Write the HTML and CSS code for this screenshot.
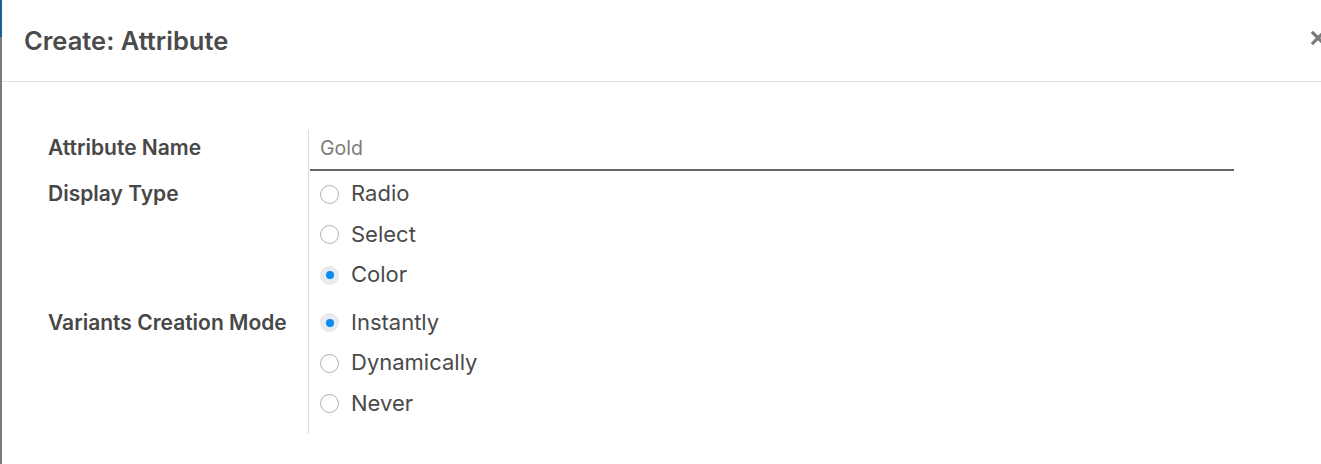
FILE: index.html
```html
<!DOCTYPE html>
<html lang="en">
<head>
<meta charset="utf-8">
<title>Create: Attribute</title>
<link rel="stylesheet" href="styles.css">
</head>
<body>
<div class="page">
  <div class="backdrop"><div class="backdrop-top"></div></div>
  <div class="modal">
    <header class="modal-header">
      <h4 class="modal-title">Create: Attribute</h4>
      <button class="close" aria-label="Close">
        <svg width="14" height="14" viewBox="0 0 14 14"><path d="M2 2 L12 12 M12 2 L2 12" stroke="#7a7a7a" stroke-width="3.2" stroke-linecap="square" fill="none"/></svg>
      </button>
    </header>
    <main class="modal-body">
      <div class="form-grid">
        <div class="label row-name">Attribute Name</div>
        <div class="value row-name">
          <div class="input">Gold</div>
        </div>

        <div class="label row-display">Display Type</div>
        <div class="value row-display">
          <div class="radio"><span class="circle"></span><span>Radio</span></div>
          <div class="radio"><span class="circle"></span><span>Select</span></div>
          <div class="radio"><span class="circle checked"></span><span>Color</span></div>
        </div>

        <div class="label row-variants">Variants Creation Mode</div>
        <div class="value row-variants last">
          <div class="radio"><span class="circle checked"></span><span>Instantly</span></div>
          <div class="radio"><span class="circle"></span><span>Dynamically</span></div>
          <div class="radio"><span class="circle"></span><span>Never</span></div>
        </div>
      </div>
    </main>
  </div>
</div>
</body>
</html>
```
FILE: styles.css
```css
html, body {
  margin: 0;
  padding: 0;
  background: #ffffff;
}
body {
  width: 1321px;
  height: 464px;
  overflow: hidden;
  font-family: Inter, Roboto, "Liberation Sans", Arial, sans-serif;
  color: #4a4a4a;
}
.page {
  display: flex;
  height: 464px;
}
.backdrop {
  width: 2px;
  flex: none;
  background: #7b7b7b;
}
.backdrop-top {
  height: 37px;
  background: #1f5f93;
}
.modal {
  flex: 1;
  min-width: 0;
  background: #fff;
  overflow: hidden;
}
.modal-header {
  height: 81px;
  border-bottom: 1px solid #e2e2e6;
  display: flex;
  align-items: center;
  justify-content: space-between;
  padding-left: 22px;
}
.modal-title {
  margin: 0;
  font-size: 25.5px;
  font-weight: 600;
  color: #4b4b4b;
}
.close {
  border: none;
  background: none;
  padding: 0;
  margin-right: -4px;
  margin-top: -5px;
  display: flex;
  cursor: pointer;
}
.modal-body {
  padding: 48px 0 0 46px;
}
.form-grid {
  display: grid;
  grid-template-columns: 260px 926px;
}
.label {
  font-size: 21px;
  font-weight: 600;
  color: #474747;
  line-height: 40px;
}
.label.row-name {
  line-height: 36px;
}
.label.row-display {
  padding-top: 0;
}
.label.row-variants {
  padding-top: 7px;
}
.value {
  border-left: 1px solid #dcdcdc;
  padding-left: 1px;
}
.value.row-name {
  padding-bottom: 3px;
}
.value.row-variants {
  padding-top: 7px;
  padding-bottom: 10px;
}
.input {
  height: 39px;
  line-height: 36px;
  border-bottom: 2px solid #666666;
  padding-left: 10px;
  font-size: 19.5px;
  color: #7c7c7c;
  box-sizing: content-box;
}
.radio {
  display: flex;
  align-items: center;
  height: 40.5px;
  padding-left: 10px;
  font-size: 22px;
  line-height: 26px;
  color: #4a4a4a;
}
.radio span:last-child {
  position: relative;
  top: -1px;
}
.circle {
  width: 19px;
  height: 19px;
  box-sizing: border-box;
  border: 1px solid #aeb3b8;
  border-radius: 50%;
  margin-right: 12px;
  flex: none;
  display: flex;
  align-items: center;
  justify-content: center;
}
.circle.checked {
  border-color: #e6e8eb;
  background: #e9ebee;
}
.circle.checked::after {
  content: "";
  width: 8px;
  height: 8px;
  border-radius: 50%;
  background: #0a8cf2;
}
```
